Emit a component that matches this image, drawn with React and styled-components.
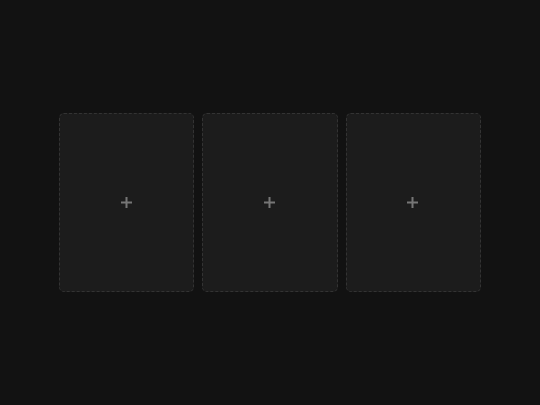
import React from "react";
import styled, { createGlobalStyle } from "styled-components";

const Global = createGlobalStyle`
  html, body { margin: 0; padding: 0; background: #121212; }
  body { font-family: "Liberation Sans", Arial, sans-serif; }
`;

const Page = styled.div`
  width: 540px;
  height: 405px;
  display: flex;
  align-items: center;
  justify-content: center;
  background: #121212;
`;

const Row = styled.div`
  width: 422px;
  display: flex;
  gap: 8px;
`;

const Slot = styled.button`
  flex: 1 1 0;
  height: 179px;
  box-sizing: border-box;
  border: 1px dashed #333333;
  border-radius: 5px;
  background: #1c1c1c;
  display: flex;
  align-items: center;
  justify-content: center;
  padding: 0;
  cursor: pointer;
`;

const Plus = styled.svg`
  width: 11px;
  height: 11px;
  display: block;
  margin: 0 1px 1px 0;
`;

function PlusIcon() {
  return (
    <Plus viewBox="0 0 11 11">
      <rect x="0" y="4.5" width="11" height="2" fill="#767676" />
      <rect x="4.5" y="0" width="2" height="11" fill="#767676" />
    </Plus>
  );
}

export default function App() {
  return (
    <>
      <Global />
      <Page>
        <Row>
          {[0, 1, 2].map((i) => (
            <Slot key={i} aria-label="Add">
              <PlusIcon />
            </Slot>
          ))}
        </Row>
      </Page>
    </>
  );
}
